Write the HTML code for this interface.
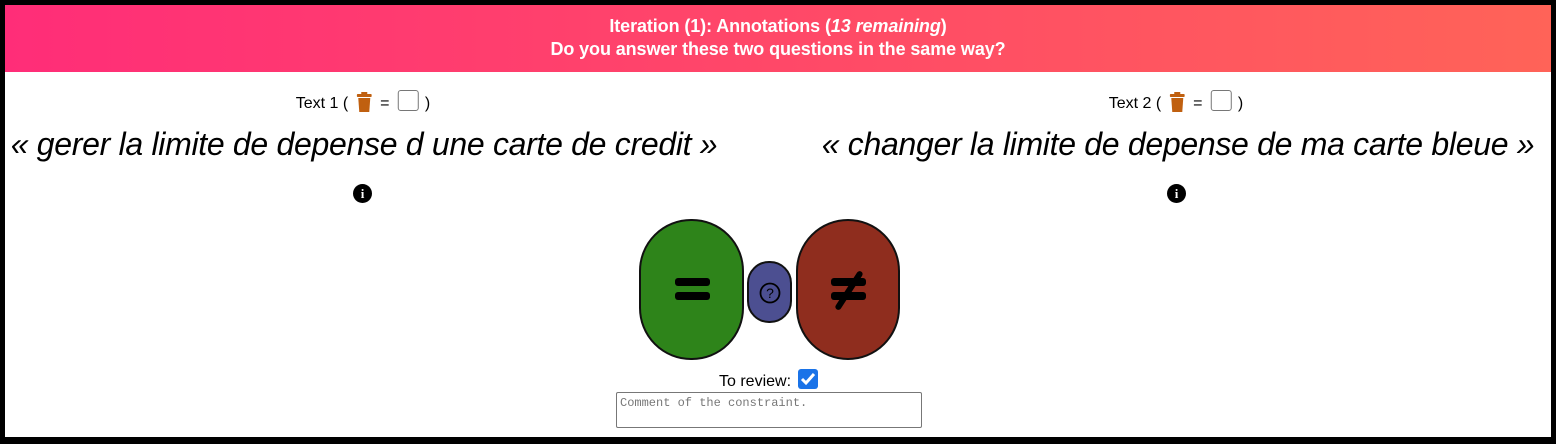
<!DOCTYPE html>
<html><head><meta charset="utf-8"><style>
html,body{margin:0;padding:0;}
body{width:1556px;height:444px;position:relative;overflow:hidden;background:#000;font-family:"Liberation Sans",Arial,sans-serif;}
.inner{position:absolute;left:5px;top:5px;width:1546px;height:432px;background:#fff;}
.hdr{position:absolute;left:0;top:0;width:1546px;height:67px;background:linear-gradient(90deg,#ff2d78,#ff6358);color:#fff;font-weight:bold;font-size:18px;text-align:center;letter-spacing:-0.1px;}
.hdr div{position:absolute;left:0;width:100%;}
.c{position:absolute;transform:translateX(-50%);white-space:nowrap;text-align:center;}
.lab{font-size:16px;top:90px;color:#000;}
.lab .box{display:inline-block;width:19px;height:19px;border:1px solid #777;border-radius:3px;vertical-align:-3px;background:#fff;margin:0 6px 0 4px;}
.big{font-style:italic;font-size:32px;top:126px;letter-spacing:-0.3px;color:#000;}
.info{position:absolute;width:19px;height:19px;border-radius:50%;background:#000;color:#fff;font-weight:bold;font-size:13px;text-align:center;line-height:19px;font-family:"Liberation Serif",serif;}
.btn{position:absolute;border:2px solid #111;box-sizing:border-box;}
</style></head><body>
<div class="inner">
<div class="hdr"><div style="top:11px">Iteration (1): Annotations (<i style="font-style:italic">13 remaining</i>)</div><div style="top:34px">Do you answer these two questions in the same way?</div></div>
</div>
<div class="c lab" style="left:363px">Text 1 ( <svg width="15" height="20" viewBox="0 0 15 20" style="vertical-align:-4px;margin:0 4px"><rect x="0" y="2" width="15" height="3" rx="1" fill="#c06010"/><rect x="4.5" y="0" width="6" height="3" fill="#c06010"/><path d="M1.5 6h12l-1 14h-10z" fill="#c06010"/></svg> = <span class="box"></span>)</div>
<div class="c lab" style="left:1176px">Text 2 ( <svg width="15" height="20" viewBox="0 0 15 20" style="vertical-align:-4px;margin:0 4px"><rect x="0" y="2" width="15" height="3" rx="1" fill="#c06010"/><rect x="4.5" y="0" width="6" height="3" fill="#c06010"/><path d="M1.5 6h12l-1 14h-10z" fill="#c06010"/></svg> = <span class="box"></span>)</div>
<div class="c big" style="left:364px">« gerer la limite de depense d une carte de credit »</div>
<div class="c big" style="left:1178px">« changer la limite de depense de ma carte bleue »</div>
<div class="info" style="left:353px;top:184px">i</div>
<div class="info" style="left:1167px;top:184px">i</div>
<div class="btn" style="left:639px;top:219px;width:105px;height:141px;border-radius:52px;background:#2e841a"><div style="position:absolute;left:34px;top:57px;width:35px;height:8px;background:#000;border-radius:3px"></div><div style="position:absolute;left:34px;top:71px;width:35px;height:8px;background:#000;border-radius:3px"></div></div>
<div class="btn" style="left:747px;top:261px;width:45px;height:62px;border-radius:22px;background:#4c4f91"><svg width="22" height="22" viewBox="0 0 22 22" style="position:absolute;left:10px;top:19px"><circle cx="11" cy="11" r="9.5" fill="none" stroke="#000" stroke-width="1.8"/><text x="11" y="16" font-size="14" text-anchor="middle" font-family="Liberation Sans" fill="#000">?</text></svg></div>
<div class="btn" style="left:796px;top:219px;width:104px;height:141px;border-radius:52px;background:#8f2d1e"><div style="position:absolute;left:33px;top:57px;width:35px;height:8px;background:#000;border-radius:3px"></div><div style="position:absolute;left:33px;top:71px;width:35px;height:8px;background:#000;border-radius:3px"></div><div style="position:absolute;left:48px;top:47px;width:6px;height:45px;background:#000;transform:rotate(33deg);border-radius:3px"></div></div>
<div style="position:absolute;left:719px;top:373px;font-size:16px;line-height:18px;color:#000;white-space:nowrap">To review:</div>
<div style="position:absolute;left:798px;top:369px;width:20px;height:20px;background:#1a73e8;border-radius:3px"><svg width="20" height="20" viewBox="0 0 20 20" style="position:absolute;left:0;top:0"><path d="M4 10l4 4 8-9" fill="none" stroke="#fff" stroke-width="3"/></svg></div>
<div style="position:absolute;left:616px;top:392px;width:306px;height:36px;border:1px solid #777;box-sizing:border-box;background:#fff;border-radius:2px;font-family:'Liberation Mono',monospace;font-size:12px;color:#777;padding:3px 3px">Comment of the constraint.</div>
</body></html>
